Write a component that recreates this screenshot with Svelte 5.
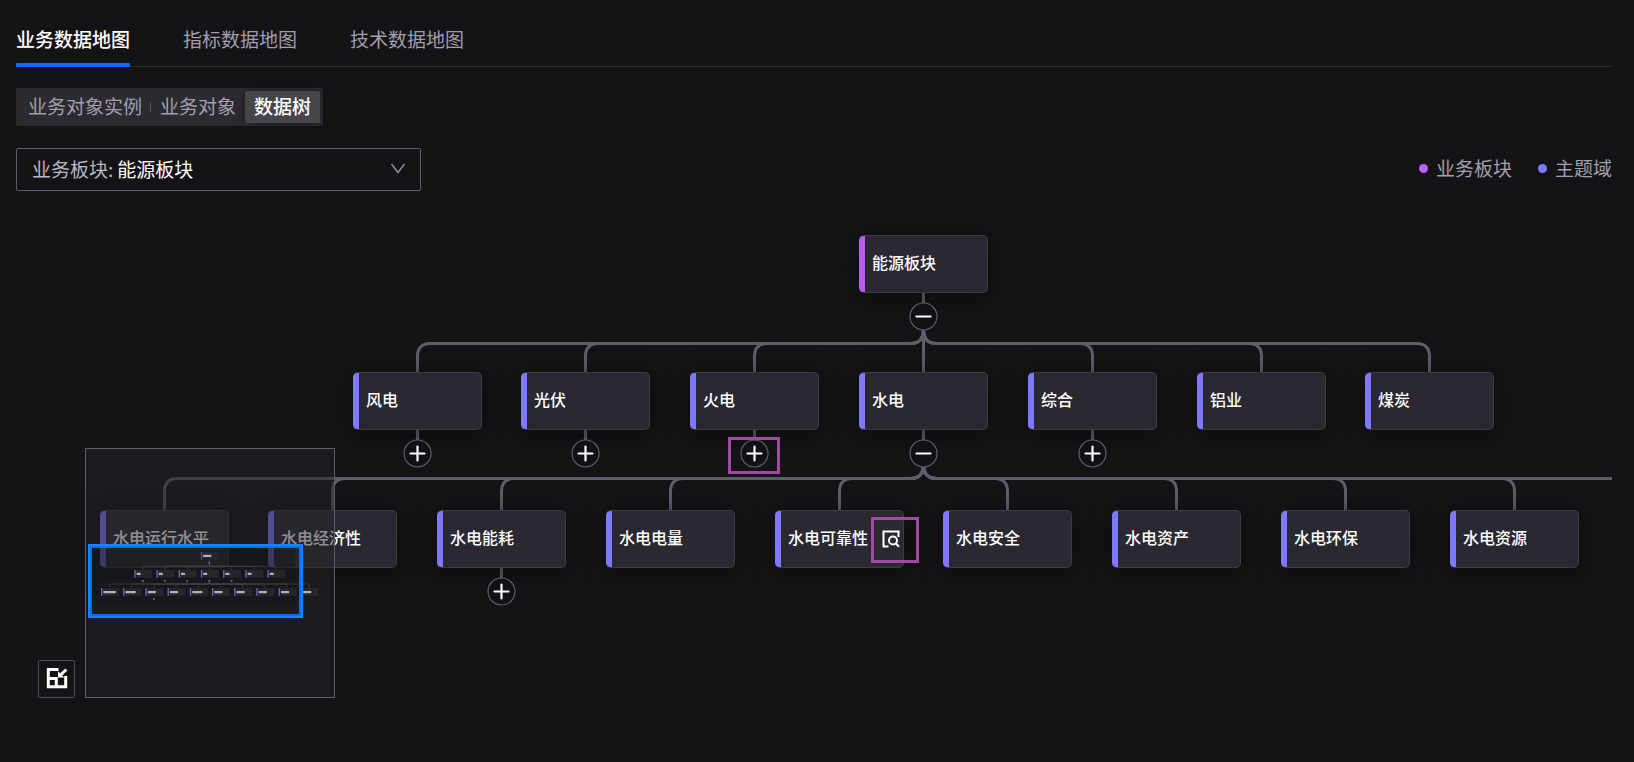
<script>
  const tabs = ['业务数据地图', '指标数据地图', '技术数据地图'];
  const views = ['业务对象实例', '业务对象', '数据树'];
  let activeTab = $state(0);
  let activeView = $state(2);

  const NODE_W = 129;
  const NODE_H = 58;

  const root = { name: '能源板块', x: 843, y: 35, kind: 'plate', toggle: 'minus' };
  const domains = [
    { name: '风电', x: 337, toggle: 'plus' },
    { name: '光伏', x: 505, toggle: 'plus' },
    { name: '火电', x: 674, toggle: 'plus' },
    { name: '水电', x: 843, toggle: 'minus' },
    { name: '综合', x: 1012, toggle: 'plus' },
    { name: '铝业', x: 1181 },
    { name: '煤炭', x: 1349 }
  ].map((n) => ({ ...n, y: 172, kind: 'domain' }));
  const topics = [
    { name: '水电运行水平', x: 84 },
    { name: '水电经济性', x: 252 },
    { name: '水电能耗', x: 421, toggle: 'plus' },
    { name: '水电电量', x: 590 },
    { name: '水电可靠性', x: 759 },
    { name: '水电安全', x: 927 },
    { name: '水电资产', x: 1096 },
    { name: '水电环保', x: 1265 },
    { name: '水电资源', x: 1434 }
  ].map((n) => ({ ...n, y: 310, kind: 'domain' }));
  const nodes = [root, ...domains, ...topics];

  // Beyond the right edge of the canvas: only its link and its overview block show.
  const offscreen = { name: '', x: 1603, y: 310, kind: 'domain' };

  const mid = (n) => n.x + NODE_W / 2;

  function link(parent, child, railY) {
    const px = mid(parent);
    const cx = mid(child);
    if (px === cx) return `M${px} ${parent.y + NODE_H}V${child.y}`;
    const s = cx > px ? 1 : -1;
    return `M${px} ${railY - 14}Q${px} ${railY} ${px + 13 * s} ${railY}H${cx - 13 * s}Q${cx} ${railY} ${cx} ${railY + 13}V${child.y}`;
  }
  const links = [
    ...domains.map((d) => link(root, d, 143.5)),
    ...[...topics, offscreen].map((t) => link(domains[3], t, 278.5))
  ];
  const stems = nodes.filter((n) => n.toggle).map((n) => `M${mid(n)} ${n.y + NODE_H}v12`);
</script>

<main class="page">
  <nav class="tabs">
    {#each tabs as tab, i}
      <button class="tab" class:active={activeTab === i} onclick={() => (activeTab = i)}>{tab}</button>
    {/each}
  </nav>

  <div class="segmented">
    {#each views as view, i}
      <button class="segment" class:active={activeView === i} onclick={() => (activeView = i)}>{view}</button>
    {/each}
  </div>

  <div class="toolbar">
    <div class="picker">
      <label for="plate">业务板块:</label>
      <select id="plate">
        <option>能源板块</option>
      </select>
      <svg class="chevron" width="16" height="12" viewBox="0 0 16 12" aria-hidden="true">
        <path d="M1.5 1L8 9.5L14.5 1" />
      </svg>
    </div>
    <ul class="legend">
      <li><i class="dot plate"></i>业务板块</li>
      <li><i class="dot domain"></i>主题域</li>
    </ul>
  </div>

  <section class="canvas">
    <svg class="links" aria-hidden="true">
      {#each [...links, ...stems] as d}
        <path {d} />
      {/each}
    </svg>

    {#each nodes as n}
      <div class="node {n.kind}" style="left:{n.x}px;top:{n.y}px">{n.name}</div>
      {#if n.toggle}
        <button
          class="toggle"
          aria-label={n.toggle === 'plus' ? '展开' : '收起'}
          style="left:{n.x + 50}px;top:{n.y + NODE_H + 9}px"
        >
          <svg width="29" height="29" viewBox="0 0 29 29">
            <circle cx="14.5" cy="14.5" r="13.5" />
            <path d={n.toggle === 'plus' ? 'M7.5 14.5h14M14.5 7.5v14' : 'M7.5 14.5h14'} />
          </svg>
        </button>
      {/if}
    {/each}

    <button class="detail" aria-label="查看详情">
      <svg width="18" height="18" viewBox="0 0 18 18" aria-hidden="true">
        <path d="M6.5 16.5H1.5V1.5H16.5V7" />
        <circle cx="11" cy="10.5" r="4" />
        <path d="M13.7 13.3L17 16.8" />
      </svg>
    </button>

    <div class="mark mark-toggle"></div>
    <div class="mark mark-detail"></div>

    <div class="minimap">
      <svg width="248" height="248" viewBox="0 0 248 248" aria-hidden="true">
        <g transform="translate(4 98.4) scale(0.1315)">
          <rect x="0" y="0" width="1560" height="420" fill="#141416" opacity="0.35" />
          {#each links as d}
            <path {d} class="mini-link" />
          {/each}
          {#each nodes as n}
            <rect class="mini-node" x={n.x} y={n.y} width="136" height={NODE_H} />
            <rect class="mini-bar {n.kind}" x={n.x} y={n.y} width="10" height={NODE_H} />
            <rect class="mini-text" x={n.x + 17} y={n.y + 21} width={n.name.length * 16} height="17" rx="6" />
            {#if n.toggle}
              <rect class="mini-toggle" x={mid(n) - 6} y={n.y + 76} width="12" height="14" />
            {/if}
          {/each}
          <rect class="mini-node" x={offscreen.x} y={offscreen.y} width="136" height={NODE_H} />
          <rect class="mini-text" x={offscreen.x + 17} y={offscreen.y + 21} width="64" height="17" rx="6" />
        </g>
      </svg>
      <div class="viewport"></div>
    </div>

    <button class="minimap-toggle" aria-label="缩略图">
      <svg width="22" height="22" viewBox="0 0 22 22" aria-hidden="true">
        <path d="M12.500 2.500H2.300V19.700H19.700V9" />
        <path d="M2.300 11.500H10.300V19.700" />
        <path d="M20.300 2.500L14 8.500" />
        <path class="solid" d="M12 4.300V10.500H18.200Z" />
      </svg>
    </button>
  </section>
</main>

<style>
  :global(body) {
    background: #141416;
  }
  .page {
    display: flex;
    flex-direction: column;
    min-height: 100vh;
    box-sizing: border-box;
    padding: 15px 22px 0 16px;
    font-family: 'Noto Sans CJK SC', sans-serif;
    font-size: 19px;
    line-height: 28px;
    color: #a19fad;
    background: #141416;
  }
  button {
    margin: 0;
    padding: 0;
    border: 0;
    background: none;
    color: inherit;
    font: inherit;
    cursor: pointer;
  }
  .tabs {
    display: flex;
    gap: 53px;
    height: 51px;
    border-bottom: 1px solid #2b2b2e;
  }
  .tab {
    position: relative;
    display: flex;
    align-items: center;
    padding-bottom: 4px;
    white-space: nowrap;
  }
  .tab.active {
    color: #fff;
    font-weight: 500;
  }
  .tab.active::after {
    content: '';
    position: absolute;
    left: 0;
    right: 0;
    bottom: -1px;
    height: 4px;
    border-radius: 1px;
    background: #0a6cff;
  }
  .segmented {
    display: flex;
    align-self: flex-start;
    margin-top: 21px;
    padding: 3px;
    border-radius: 2px;
    background: #2c2b31;
  }
  .segment {
    position: relative;
    height: 32px;
    padding: 0 9px;
    line-height: 30px;
    padding-bottom: 2px;
    border-radius: 2px;
    white-space: nowrap;
  }
  .segment:first-child::after {
    content: '';
    position: absolute;
    right: 0;
    top: 11px;
    width: 1px;
    height: 10px;
    background: #56545f;
  }
  .segment.active {
    color: #fff;
    font-weight: 500;
    background: #46454b;
    box-shadow: 0 0 12px rgba(0, 0, 0, 0.4);
  }
  .toolbar {
    display: flex;
    align-items: center;
    justify-content: space-between;
    margin-top: 22px;
  }
  .picker {
    position: relative;
    display: flex;
    align-items: center;
    gap: 4px;
    box-sizing: border-box;
    width: 405px;
    height: 43px;
    padding: 0 0 2px 15px;
    border: 1px solid #5f5d69;
    border-radius: 2px;
    color: #b9b7c5;
  }
  .picker select {
    flex: 1;
    height: 39px;
    padding: 0;
    border: 0;
    outline: 0;
    appearance: none;
    background: transparent;
    color: #fff;
    font: inherit;
  }
  .chevron {
    position: absolute;
    right: 14px;
    top: 14px;
    fill: none;
    stroke: #8f8d99;
    stroke-width: 1.5;
    pointer-events: none;
  }
  .legend {
    display: flex;
    gap: 26px;
    margin: 0;
    padding: 0 0 3px;
    list-style: none;
  }
  .legend li {
    display: flex;
    align-items: center;
    gap: 8px;
  }
  .dot {
    width: 9px;
    height: 9px;
    border-radius: 50%;
  }
  .dot.plate {
    background: #bb62f5;
  }
  .dot.domain {
    background: #7f79ff;
  }
  .canvas {
    position: relative;
    flex: 1;
    min-height: 540px;
    margin-top: 9px;
    overflow: hidden;
  }
  .links {
    position: absolute;
    inset: 0;
    width: 100%;
    height: 100%;
    fill: none;
    stroke: #5f5d69;
    stroke-width: 3;
  }
  .node {
    position: absolute;
    box-sizing: border-box;
    width: 129px;
    height: 58px;
    padding-left: 13px;
    border: 1px solid #3d3c44;
    border-left: 0;
    border-radius: 5px;
    color: #fff;
    font-size: 16px;
    font-weight: 500;
    line-height: 52px;
    white-space: nowrap;
    background: linear-gradient(90deg, var(--accent) 6px, #2a2830 6px);
    box-shadow: 0 4px 24px rgba(0, 0, 0, 0.45);
  }
  .node.plate {
    --accent: #b55cf2;
  }
  .node.domain {
    --accent: #7f79ff;
  }
  .toggle {
    position: absolute;
    width: 29px;
    height: 29px;
  }
  .toggle svg {
    display: block;
    fill: #121115;
    stroke: #5f5d69;
    stroke-width: 1.2;
  }
  .toggle path {
    stroke: #fff;
    stroke-width: 2.2;
    stroke-linecap: round;
  }
  .detail {
    position: absolute;
    left: 866px;
    top: 330px;
    width: 18px;
    height: 18px;
  }
  .detail svg {
    display: block;
    fill: none;
    stroke: #fff;
    stroke-width: 2;
  }
  .mark {
    position: absolute;
    box-sizing: border-box;
    border: 3px solid #a349a4;
    pointer-events: none;
  }
  .mark-toggle {
    left: 712px;
    top: 237px;
    width: 52px;
    height: 37px;
  }
  .mark-detail {
    left: 855px;
    top: 317px;
    width: 48px;
    height: 46px;
  }
  .minimap {
    position: absolute;
    left: 69px;
    top: 248px;
    width: 248px;
    height: 248px;
    border: 1px solid #5f5d69;
    background: rgba(36, 35, 42, 0.5);
  }
  .minimap svg {
    display: block;
  }
  .mini-link {
    fill: none;
    stroke: #46454d;
    stroke-width: 5;
  }
  .mini-node {
    fill: #27262e;
  }
  .mini-bar.plate {
    fill: #6b4189;
  }
  .mini-bar.domain {
    fill: #6864c4;
  }
  .mini-text {
    fill: #b4b4b8;
  }
  .mini-toggle {
    fill: #77767c;
  }
  .viewport {
    position: absolute;
    left: 2px;
    top: 95px;
    width: 211px;
    height: 70px;
    border: 2px solid #1a82ff;
    box-shadow: inset 0 0 0 2px #0a6cff;
  }
  .minimap-toggle {
    position: absolute;
    left: 22px;
    top: 460px;
    display: flex;
    align-items: center;
    justify-content: center;
    box-sizing: border-box;
    width: 37px;
    height: 38px;
    padding-bottom: 3px;
    border: 1px solid #4d4b56;
    border-radius: 2px;
  }
  .minimap-toggle svg {
    fill: none;
    stroke: #fff;
    stroke-width: 3;
  }
  .minimap-toggle .solid {
    fill: #fff;
    stroke: none;
  }
</style>
